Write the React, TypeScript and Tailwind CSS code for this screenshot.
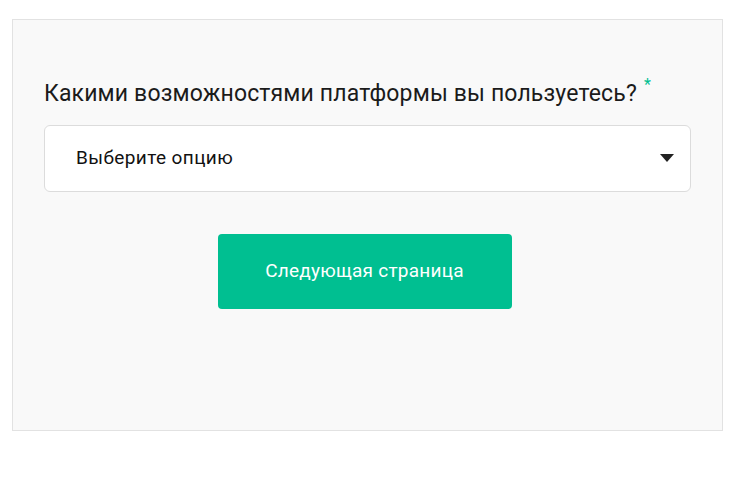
export default function App() {
  return (
    <div className="min-h-screen bg-white pt-[19px] px-[12px] font-['Roboto',sans-serif]">
      <div className="w-[711px] h-[412px] border border-[#e2e2e2] bg-[#f9f9f9] px-[31px] pt-[58px]">
        <h2 className="text-[23px] leading-[31px] tracking-[0.15px] text-[#1b1b1b] flex items-start">
          Какими возможностями платформы вы пользуетесь?
          <span className="ml-[7px] text-[16px] leading-[14px] text-[#00bf91]">*</span>
        </h2>
        <div className="mt-[16px] h-[67px] rounded-[6px] border border-[#dcdcdc] bg-white flex items-center justify-between pl-[31px] pr-[16px]">
          <span className="text-[19px] tracking-[0.4px] text-[#111]">Выберите опцию</span>
          <svg width="14" height="9" viewBox="0 0 14 9" className="text-[#222]">
            <path d="M0 0 H14 L7 8 Z" fill="currentColor" />
          </svg>
        </div>
        <div className="flex justify-center mt-[42px]">
          <button className="w-[294px] h-[75px] rounded-[4px] bg-[#00bf91] text-white text-[19px] tracking-[0.25px] mr-[6px]">
            Следующая страница
          </button>
        </div>
      </div>
    </div>
  );
}
